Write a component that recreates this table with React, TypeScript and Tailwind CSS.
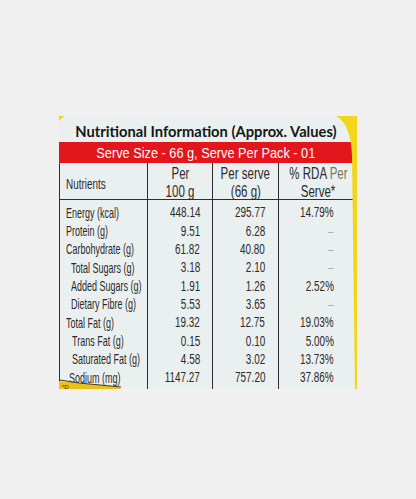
import React from "react";

const rows: { label: string; indent: number; a: string; b: string; c: string }[] = [
  { label: "Energy (kcal)", indent: 0, a: "448.14", b: "295.77", c: "14.79%" },
  { label: "Protein (g)", indent: 0, a: "9.51", b: "6.28", c: "–" },
  { label: "Carbohydrate (g)", indent: 0, a: "61.82", b: "40.80", c: "–" },
  { label: "Total Sugars (g)", indent: 5, a: "3.18", b: "2.10", c: "–" },
  { label: "Added Sugars (g)", indent: 5, a: "1.91", b: "1.26", c: "2.52%" },
  { label: "Dietary Fibre (g)", indent: 5, a: "5.53", b: "3.65", c: "–" },
  { label: "Total Fat (g)", indent: 0, a: "19.32", b: "12.75", c: "19.03%" },
  { label: "Trans Fat (g)", indent: 6, a: "0.15", b: "0.10", c: "5.00%" },
  { label: "Saturated Fat (g)", indent: 6, a: "4.58", b: "3.02", c: "13.73%" },
  { label: "Sodium (mg)", indent: 3, a: "1147.27", b: "757.20", c: "37.86%" },
];

const arial = { fontFamily: '"Liberation Sans", Arial, sans-serif' };

export default function App() {
  return (
    <div className="w-[416px] h-[499px] bg-[#f0f0f0] flex justify-center pt-[116px]">
      <div className="relative w-[298px] h-[273px] bg-[#eaf0ef] overflow-hidden text-[#2b2b2b]" style={arial}>
        <div className="h-[26px] flex items-end justify-center pb-[3px] pr-[4px]">
          <span
            className="inline-block scale-x-[0.92] origin-center whitespace-nowrap text-[16px] leading-none text-[#161616] font-bold"
            style={{ fontFamily: 'Lato, "Noto Sans", sans-serif' }}
          >
            Nutritional Information (Approx. Values)
          </span>
        </div>
        <div className="h-[21px] bg-[#e4161d] mr-[4px] flex items-center justify-center">
          <span className="inline-block scale-x-[0.85] origin-center whitespace-nowrap text-white text-[15px] leading-none">
            Serve Size - 66 g, Serve Per Pack - 01
          </span>
        </div>
        <div className="grid grid-cols-[87px_65px_66px_80px] border-l-[1.5px] border-[#2e2e2e] h-[37px] border-b-[1.5px] mr-[4px]">
          <div className="flex items-center pl-[6px] pt-[3px]">
            <span className="inline-block scale-x-[0.64] origin-left whitespace-nowrap text-[15.5px] leading-none">Nutrients</span>
          </div>
          <div className="border-l-[1.5px] border-[#2e2e2e] flex flex-col items-center justify-center text-[16px] leading-[18px] pt-[2px]">
            <span className="inline-block scale-x-[0.72] origin-center whitespace-nowrap">Per</span>
            <span className="inline-block scale-x-[0.72] origin-center whitespace-nowrap">100 g</span>
          </div>
          <div className="border-l-[1.5px] border-[#2e2e2e] flex flex-col items-center justify-center text-[16px] leading-[18px] pt-[2px]">
            <span className="inline-block scale-x-[0.72] origin-center whitespace-nowrap">Per serve</span>
            <span className="inline-block scale-x-[0.72] origin-center whitespace-nowrap">(66 g)</span>
          </div>
          <div className="border-l-[1.5px] border-[#2e2e2e] flex flex-col items-center justify-center text-[16px] leading-[18px] pt-[2px]">
            <span className="inline-block scale-x-[0.72] origin-center whitespace-nowrap">
              % RDA <span className="text-[#77745e]">Per</span>
            </span>
            <span className="inline-block scale-x-[0.72] origin-center whitespace-nowrap">Serve*</span>
          </div>
        </div>
        <div className="grid grid-cols-[87px_65px_66px_80px] border-l-[1.5px] border-[#2e2e2e] h-[189px] mr-[4px]">
          <div className="flex flex-col pt-[3px]">
            {rows.map((r) => (
              <div key={r.label} className="h-[18.33px] flex items-center" style={{ paddingLeft: 6 + r.indent }}>
                <span className="inline-block scale-x-[0.6] origin-left whitespace-nowrap text-[15px] leading-none">
                  {r.label}
                </span>
              </div>
            ))}
          </div>
          <div className="border-l-[1.5px] border-[#2e2e2e] flex flex-col pt-[3px] pr-[12px]">
            {rows.map((r) => (
              <div key={r.label} className="h-[18.33px] flex items-center justify-end">
                <span className="inline-block scale-x-[0.64] origin-right whitespace-nowrap text-[15.5px] leading-none">{r.a}</span>
              </div>
            ))}
          </div>
          <div className="border-l-[1.5px] border-[#2e2e2e] flex flex-col pt-[3px] pr-[13px]">
            {rows.map((r) => (
              <div key={r.label} className="h-[18.33px] flex items-center justify-end">
                <span className="inline-block scale-x-[0.64] origin-right whitespace-nowrap text-[15.5px] leading-none">{r.b}</span>
              </div>
            ))}
          </div>
          <div className="border-l-[1.5px] border-[#2e2e2e] flex flex-col pt-[3px] pr-[24px]">
            {rows.map((r) => (
              <div key={r.label} className="h-[18.33px] flex items-center justify-end">
                <span
                  className={`inline-block scale-x-[0.64] origin-right whitespace-nowrap text-[15.5px] leading-none ${
                    r.c === "–" ? "text-[#b0b0b0]" : ""
                  }`}
                >
                  {r.c}
                </span>
              </div>
            ))}
          </div>
        </div>
        <svg className="absolute inset-0 pointer-events-none" width="298" height="273" viewBox="0 0 298 273">
          <polygon points="0,0 5,0 0,5" fill="#f2d21a" />
          <path d="M277,0 L298,0 L298,273 L296,273 L295,200 L294,120 L293,40 Q292,8 277,0 Z" fill="#f3d51c" />
          <path d="M0,265 L20,267 L60,271 L62,273 L0,273 Z" fill="#e9c11a" />
          <path d="M1,264 L20,267 L62,271" stroke="#4a3a1a" strokeWidth="1.2" fill="none" />
          <text x="3" y="273" fontSize="6" fill="#3a3010">*D</text>
        </svg>
      </div>
    </div>
  );
}
